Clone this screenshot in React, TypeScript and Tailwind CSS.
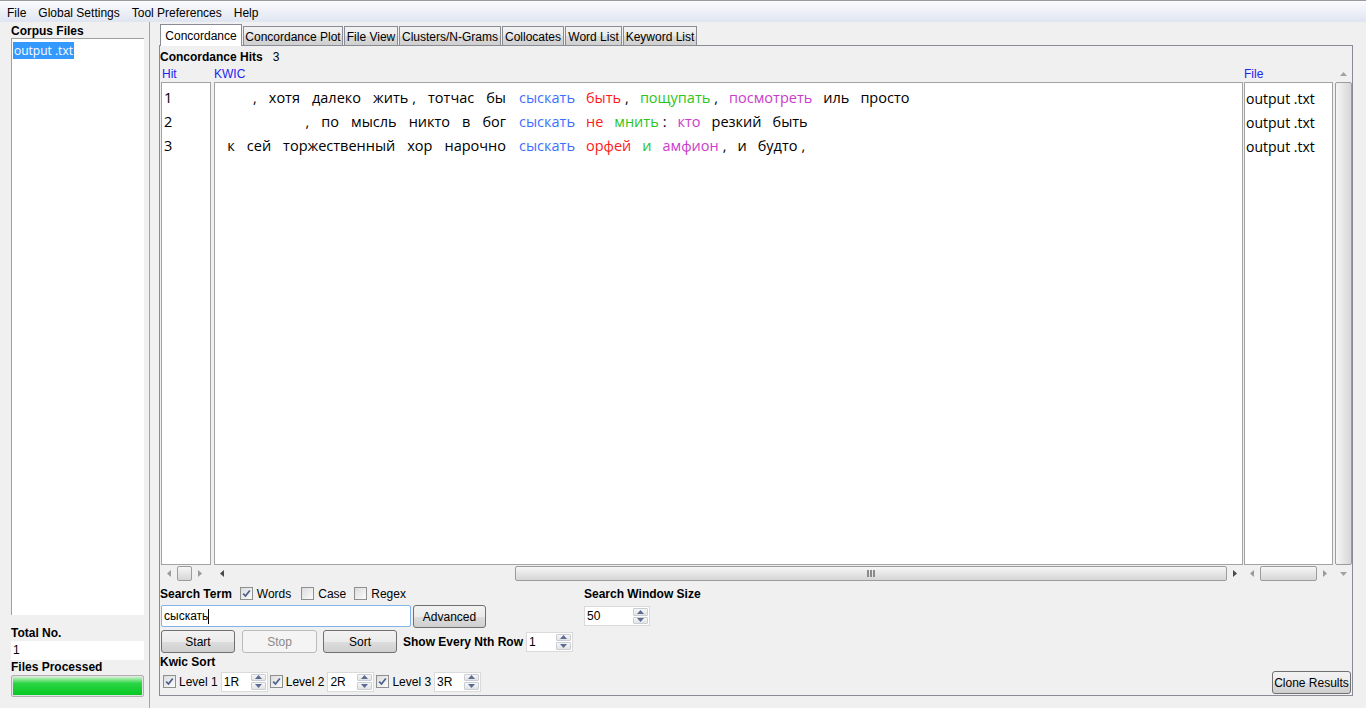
import React from 'react';

type Tok = { t: string; c?: string; p?: boolean };

const RED = 'text-[#ff1a1a]';
const GREEN = 'text-[#2dc41c]';
const MAG = 'text-[#cc3ccc]';

const rows: { hit: string; left: Tok[]; right: Tok[] }[] = [
  {
    hit: '1',
    left: [{ t: ',', p: true }, { t: 'хотя' }, { t: 'далеко' }, { t: 'жить' }, { t: ',', p: true }, { t: 'тотчас' }, { t: 'бы' }],
    right: [
      { t: 'быть', c: RED },
      { t: ',', p: true },
      { t: 'пощупать', c: GREEN },
      { t: ',', p: true },
      { t: 'посмотреть', c: MAG },
      { t: 'иль' },
      { t: 'просто' },
    ],
  },
  {
    hit: '2',
    left: [{ t: ',', p: true }, { t: 'по' }, { t: 'мысль' }, { t: 'никто' }, { t: 'в' }, { t: 'бог' }],
    right: [
      { t: 'не', c: RED },
      { t: 'мнить', c: GREEN },
      { t: ':', p: true },
      { t: 'кто', c: MAG },
      { t: 'резкий' },
      { t: 'быть' },
    ],
  },
  {
    hit: '3',
    left: [{ t: 'к' }, { t: 'сей' }, { t: 'торжественный' }, { t: 'хор' }, { t: 'нарочно' }],
    right: [
      { t: 'орфей', c: RED },
      { t: 'и', c: GREEN },
      { t: 'амфион', c: MAG },
      { t: ',', p: true },
      { t: 'и' },
      { t: 'будто' },
      { t: ',', p: true },
    ],
  },
];

// tokens of one side of a kwic line; right side sits a touch tighter
const Tokens = ({ toks, tight }: { toks: Tok[]; tight?: boolean }) => (
  <>
    {toks.map((k, i) => (
      <span
        key={i}
        className={`${i === 0 ? '' : k.p ? 'ml-[4px]' : tight ? 'ml-[11px]' : 'ml-[12px]'} ${k.c ?? 'text-black'}`}
      >
        {k.t}
      </span>
    ))}
  </>
);

const ArrowH = ({ dir, dim }: { dir: 'l' | 'r'; dim?: boolean }) => (
  <div className="flex w-[16px] items-center justify-center">
    <svg width="4" height="7" viewBox="0 0 4 7">
      <path d={dir === 'l' ? 'M4 0L0 3.5L4 7Z' : 'M0 0L4 3.5L0 7Z'} fill={dim ? '#9a9a9a' : '#4a4a4a'} />
    </svg>
  </div>
);

const ArrowV = ({ dir }: { dir: 'u' | 'd' }) => (
  <div className="flex h-[17px] items-center justify-center">
    <svg width="7" height="4" viewBox="0 0 7 4">
      <path d={dir === 'u' ? 'M0 4L3.5 0L7 4Z' : 'M0 0L3.5 4L7 0Z'} fill="#a2a2a2" />
    </svg>
  </div>
);

const HThumb = ({ className, grip }: { className: string; grip?: boolean }) => (
  <div
    className={`flex h-[15px] items-center justify-center rounded-[2px] border border-[#9c9c9c] bg-[linear-gradient(#f6f6f6,#e6e6e6_50%,#d6d6d6)] ${className}`}
  >
    {grip && (
      <div className="flex gap-[1px]">
        <div className="h-[7px] w-[2px] bg-[#8a8a8a]" />
        <div className="h-[7px] w-[2px] bg-[#8a8a8a]" />
        <div className="h-[7px] w-[2px] bg-[#8a8a8a]" />
      </div>
    )}
  </div>
);

const Check = ({ on }: { on?: boolean }) => (
  <div className="flex h-[13px] w-[13px] shrink-0 items-center justify-center border border-[#8e8f8f] bg-[linear-gradient(135deg,#dcdcdc,#fbfbfb)]">
    {on && (
      <svg width="9" height="9" viewBox="0 0 9 9">
        <path d="M1.2 4.6L3.5 7L7.8 1.5" stroke="#4b5f8f" strokeWidth="1.7" fill="none" />
      </svg>
    )}
  </div>
);

const Spinner = ({ value, w }: { value: string; w: string }) => (
  <div className={`flex h-[20px] border border-[#dadada] bg-white ${w}`}>
    <span className="flex-1 pl-[2px] leading-[18px]">{value}</span>
    <div className="flex w-[16px] flex-col gap-[1px] py-[1px] pr-[1px]">
      <div className="flex flex-1 items-center justify-center rounded-[1px] border border-[#c9cdd4] bg-[linear-gradient(#f7f7f7,#e3e3e3)]">
        <svg width="7" height="4" viewBox="0 0 7 4">
          <path d="M0 4L3.5 0L7 4Z" fill="#5a6b94" />
        </svg>
      </div>
      <div className="flex flex-1 items-center justify-center rounded-[1px] border border-[#c9cdd4] bg-[linear-gradient(#f7f7f7,#e3e3e3)]">
        <svg width="7" height="4" viewBox="0 0 7 4">
          <path d="M0 0L3.5 4L7 0Z" fill="#5a6b94" />
        </svg>
      </div>
    </div>
  </div>
);

const Btn = ({ label, w, disabled, h = 'h-[23px]' }: { label: string; w: string; disabled?: boolean; h?: string }) => (
  <div
    className={`flex shrink-0 items-center justify-center rounded-[3px] border ${
      disabled
        ? 'border-[#b8bcbf] bg-[#f4f4f4] text-[#8a8a8a]'
        : 'border-[#707070] bg-[linear-gradient(#f2f2f2,#ebebeb_50%,#dddddd_51%,#cfcfcf)] text-black'
    } ${w} ${h}`}
  >
    {label}
  </div>
);

const tabs = [
  { t: 'Concordance Plot', w: 'w-[100px]' },
  { t: 'File View', w: 'w-[54px]' },
  { t: 'Clusters/N-Grams', w: 'w-[102px]' },
  { t: 'Collocates', w: 'w-[62px]' },
  { t: 'Word List', w: 'w-[57px]' },
  { t: 'Keyword List', w: 'w-[74px]' },
];

export default function App() {
  return (
    <div className="flex h-[708px] w-[1366px] flex-col overflow-hidden bg-[#f0f0f0] font-['Liberation_Sans',Arial,sans-serif] text-[12px] text-black">
      {/* menu bar */}
      <div className="flex h-[22px] shrink-0 items-center gap-[12px] border-t border-[#9a9a9a] bg-[linear-gradient(#fbfbfd,#dfe5f1)] pl-[7px] pt-[2px]">
        <span>File</span>
        <span>Global Settings</span>
        <span>Tool Preferences</span>
        <span>Help</span>
      </div>

      <div className="flex min-h-0 flex-1">
        {/* left: corpus files */}
        <div className="flex w-[149px] shrink-0 flex-col pl-[11px] pr-[5px]">
          <div className="h-[16px] pt-[2px] font-bold leading-[14px]">Corpus Files</div>
          <div className="flex-1 border-t border-l border-[#a0a0a0] bg-white pt-[3px] pl-[1px]">
            <span className="bg-[#3399ff] px-[1px] font-['Open_Sans',sans-serif] text-[12px] leading-[14px] text-white">
              output .txt
            </span>
          </div>
          <div className="mt-[11px] h-[14px] font-bold leading-[14px]">Total No.</div>
          <div className="mt-[1px] h-[19px] bg-white pl-[2px] leading-[19px]">1</div>
          <div className="h-[14px] font-bold leading-[14px]">Files Processed</div>
          <div className="mt-[1px] h-[22px] rounded-[2px] border border-[#b0b0b0] bg-[#e4e4e4] p-[1px]">
            <div className="h-full w-full bg-[linear-gradient(#c6f3c6,#2bd545_35%,#05c823)]" />
          </div>
          <div className="h-[11px]" />
        </div>
        <div className="w-[1px] shrink-0 bg-[#a4a4a4]" />

        {/* right */}
        <div className="flex min-w-0 flex-1 flex-col pl-[9px] pr-[13px] pb-[12px]">
          <div className="flex h-[23px] shrink-0 items-end gap-[1px] pl-[1px] pt-[2px]">
            <div className="relative z-10 -mb-[1px] flex h-[22px] w-[82px] items-center justify-center border border-b-0 border-[#898c95] bg-white">
              Concordance
            </div>
            {tabs.map((t) => (
              <div
                key={t.t}
                className={`flex h-[19px] items-center justify-center border border-b-0 border-[#898c95] bg-[linear-gradient(#f2f2f2,#ebebeb_50%,#dcdcdc_51%,#cfcfcf)] pt-[1px] ${t.w}`}
              >
                {t.t}
              </div>
            ))}
          </div>

          <div className="flex min-h-0 flex-1 flex-col border border-[#898c95] bg-[#f0f0f0]">
            <div className="mt-[4px] flex h-[14px] items-center leading-[14px]">
              <span className="font-bold">Concordance Hits</span>
              <span className="ml-[10px]">3</span>
            </div>

            {/* table */}
            <div className="mt-[1px] flex h-[517px] shrink-0">
              <div className="flex min-w-0 flex-1 flex-col">
                <div className="flex h-[17px] items-center text-[#2424f0]">
                  <span className="ml-[2px] w-[52px]">Hit</span>
                  <span className="flex-1">KWIC</span>
                  <span className="w-[89px]">File</span>
                </div>
                <div className="flex flex-1 font-['Open_Sans',sans-serif] text-[14.5px]">
                  <div className="ml-[1px] w-[50px] border border-[#a3a3a3] bg-white pt-[3px] pl-[2px]">
                    {rows.map((r) => (
                      <div key={r.hit} className="flex h-[24px] items-center">
                        {r.hit}
                      </div>
                    ))}
                  </div>
                  <div className="ml-[3px] min-w-0 flex-1 border border-[#a3a3a3] bg-white pt-[3px]">
                    {rows.map((r) => (
                      <div key={r.hit} className="flex h-[24px] items-center whitespace-nowrap">
                        <div className="flex w-[291px] shrink-0 justify-end">
                          <Tokens toks={r.left} />
                        </div>
                        <span className="ml-[13px] text-[#3f6fff]">сыскать</span>
                        <span className="ml-[11px] flex">
                          <Tokens toks={r.right} tight />
                        </span>
                      </div>
                    ))}
                  </div>
                  <div className="ml-[1px] w-[89px] border border-[#a3a3a3] bg-white pt-[3px] pl-[1px]">
                    {rows.map((r) => (
                      <div key={r.hit} className="flex h-[24px] items-center text-[14px]">
                        output .txt
                      </div>
                    ))}
                  </div>
                </div>
                <div className="flex h-[17px] items-center">
                  <div className="ml-[1px] flex h-[16px] w-[50px] items-center">
                    <ArrowH dir="l" dim />
                    <HThumb className="w-[15px]" />
                    <ArrowH dir="r" dim />
                  </div>
                  <div className="ml-[3px] flex h-[16px] min-w-0 flex-1 items-center">
                    <ArrowH dir="l" />
                    <div className="flex flex-1 items-center">
                      <div className="w-[285px]" />
                      <HThumb className="flex-1" grip />
                    </div>
                    <ArrowH dir="r" />
                  </div>
                  <div className="ml-[1px] flex h-[16px] w-[89px] items-center">
                    <ArrowH dir="l" dim />
                    <HThumb className="flex-1" />
                    <ArrowH dir="r" dim />
                  </div>
                </div>
              </div>
              <div className="ml-[2px] flex w-[17px] flex-col">
                <ArrowV dir="u" />
                <div className="flex-1 rounded-[2px] border border-[#9c9c9c] bg-[linear-gradient(to_right,#f6f6f6,#e6e6e6_50%,#d6d6d6)]" />
                <ArrowV dir="d" />
              </div>
            </div>

            {/* controls */}
            <div className="flex flex-1 pt-[3px]">
              <div className="flex w-[424px] shrink-0 flex-col">
                <div className="flex h-[17px] items-center">
                  <span className="font-bold">Search Term</span>
                  <span className="ml-[8px]">
                    <Check on />
                  </span>
                  <span className="ml-[4px]">Words</span>
                  <span className="ml-[10px]">
                    <Check />
                  </span>
                  <span className="ml-[4px]">Case</span>
                  <span className="ml-[8px]">
                    <Check />
                  </span>
                  <span className="ml-[4px]">Regex</span>
                </div>
                <div className="mt-[3px] flex h-[23px] items-start">
                  <div className="ml-[1px] flex h-[22px] w-[250px] items-center rounded-[2px] border border-[#7eb4ea] bg-white pl-[2px]">
                    <span>сыскать</span>
                    <span className="h-[15px] w-[1px] bg-black" />
                  </div>
                  <div className="ml-[2px]">
                    <Btn label="Advanced" w="w-[73px]" />
                  </div>
                </div>
                <div className="mt-[2px] flex h-[23px] items-center">
                  <div className="ml-[1px]">
                    <Btn label="Start" w="w-[74px]" />
                  </div>
                  <div className="ml-[7px]">
                    <Btn label="Stop" w="w-[75px]" disabled />
                  </div>
                  <div className="ml-[6px]">
                    <Btn label="Sort" w="w-[74px]" />
                  </div>
                  <span className="ml-[6px] font-bold">Show Every Nth Row</span>
                  <div className="ml-[3px]">
                    <Spinner value="1" w="w-[47px]" />
                  </div>
                </div>
                <div className="mt-[2px] h-[14px] font-bold leading-[14px]">Kwic Sort</div>
                <div className="mt-[3px] flex h-[19px] items-center">
                  <span className="ml-[3px]">
                    <Check on />
                  </span>
                  <span className="ml-[3px]">Level 1</span>
                  <span className="ml-[3px]">
                    <Spinner value="1R" w="w-[47px]" />
                  </span>
                  <span className="ml-[2px]">
                    <Check on />
                  </span>
                  <span className="ml-[3px]">Level 2</span>
                  <span className="ml-[3px]">
                    <Spinner value="2R" w="w-[47px]" />
                  </span>
                  <span className="ml-[2px]">
                    <Check on />
                  </span>
                  <span className="ml-[3px]">Level 3</span>
                  <span className="ml-[3px]">
                    <Spinner value="3R" w="w-[47px]" />
                  </span>
                </div>
              </div>
              <div className="flex flex-col">
                <div className="flex h-[17px] items-center font-bold">Search Window Size</div>
                <div className="mt-[4px]">
                  <Spinner value="50" w="w-[66px]" />
                </div>
              </div>
              <div className="flex flex-1 items-end justify-end pr-[1px] pb-[1px]">
                <Btn label="Clone Results" w="w-[79px]" />
              </div>
            </div>
          </div>
        </div>
      </div>
    </div>
  );
}
